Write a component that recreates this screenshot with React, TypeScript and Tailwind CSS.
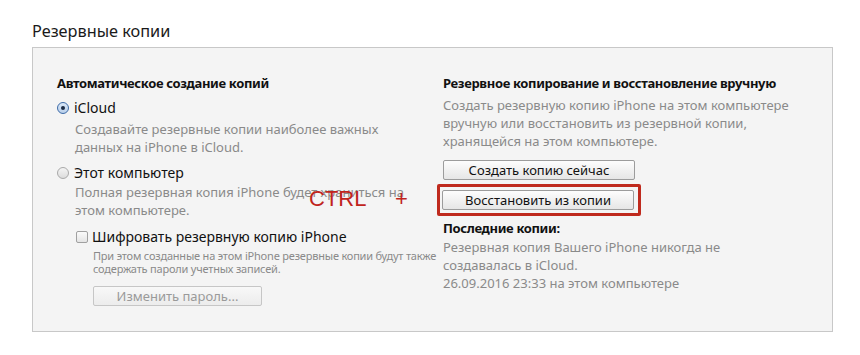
import React from "react";

const font = { fontFamily: '"Noto Sans", "Open Sans", sans-serif' };

function Radio({ checked }: { checked: boolean }) {
  return checked ? (
    <span className="flex h-[12px] w-[12px] shrink-0 items-center justify-center rounded-full border border-[#3d6ba8] bg-gradient-to-b from-[#dbe8f7] to-[#b9cfea]">
      <span className="h-[4px] w-[4px] rounded-full bg-[#1b2b44]" />
    </span>
  ) : (
    <span className="h-[12px] w-[12px] shrink-0 rounded-full border border-[#a9a9a9] bg-gradient-to-b from-[#f4f4f4] to-[#dcdcdc]" />
  );
}

function Btn({ children }: { children: React.ReactNode }) {
  return (
    <div className="flex h-[20px] w-[192px] items-center justify-center rounded-[2px] border border-[#9c9c9c] bg-gradient-to-b from-[#fdfdfd] to-[#e6e6e6] text-[13px] leading-none text-[#111]">
      {children}
    </div>
  );
}

export default function App() {
  return (
    <div className="relative h-[355px] w-[860px] bg-white" style={font}>
      <div className="pl-[32px] pt-[19px] text-[16.3px] leading-[24px] text-[#1a1a1a]">
        Резервные копии
      </div>
      <div className="ml-[32px] mt-[4px] flex h-[285px] w-[801px] border border-[#c8c8c8] bg-[#f4f4f4] pl-[24px] pt-[26px]">
        {/* left column */}
        <div className="w-[386px] shrink-0">
          <div className="text-[13px] font-bold leading-[18px] tracking-[-0.35px] text-[#111]">
            Автоматическое создание копий
          </div>
          <div className="mt-[7px] flex items-center gap-[5px]">
            <Radio checked />
            <span className="text-[14px] leading-[18px] text-[#111]">iCloud</span>
          </div>
          <div className="ml-[18px] mt-[3px] text-[13px] leading-[18px] text-[#8a8a8a]">
            Создавайте резервные копии наиболее важных
            <br />
            данных на iPhone в iCloud.
          </div>
          <div className="mt-[8px] flex items-center gap-[5px]">
            <Radio checked={false} />
            <span className="text-[14px] leading-[18px] text-[#111]">Этот компьютер</span>
          </div>
          <div className="ml-[18px] mt-[1px] text-[13px] leading-[18px] text-[#8a8a8a]">
            Полная резервная копия iPhone будет храниться на
            <br />
            этом компьютере.
          </div>
          <div className="ml-[19px] mt-[9px] flex items-center gap-[4px]">
            <span className="h-[12px] w-[12px] shrink-0 rounded-[2px] border border-[#a0a0a0] bg-gradient-to-b from-[#fafafa] to-[#e4e4e4]" />
            <span className="text-[14px] leading-[18px] text-[#111]">
              Шифровать резервную копию iPhone
            </span>
          </div>
          <div className="ml-[36px] mt-[3px] text-[11px] leading-[13px] tracking-[-0.2px] text-[#8a8a8a]">
            При этом созданные на этом iPhone резервные копии будут также
            <br />
            содержать пароли учетных записей.
          </div>
          <div className="ml-[36px] mt-[11px] flex h-[20px] w-[169px] items-center justify-center rounded-[2px] border border-[#c6c6c6] bg-gradient-to-b from-[#f8f8f8] to-[#ececec] text-[13px] leading-none text-[#9a9a9a]">
            Изменить пароль...
          </div>
        </div>
        {/* right column */}
        <div className="flex flex-col">
          <div className="text-[13px] font-bold leading-[18px] tracking-[-0.35px] text-[#111]">
            Резервное копирование и восстановление вручную
          </div>
          <div className="mt-[4px] text-[13px] leading-[18px] text-[#8a8a8a]">
            Создать резервную копию iPhone на этом компьютере
            <br />
            вручную или восстановить из резервной копии,
            <br />
            хранящейся на этом компьютере.
          </div>
          <div className="mt-[10px]">
            <Btn>Создать копию сейчас</Btn>
          </div>
          <div className="ml-[-6px] mt-[4px] w-[204px] rounded-[2px] border-[3px] border-[#bf2a1d] px-[2px] py-[3px]">
            <Btn>Восстановить из копии</Btn>
          </div>
          <div className="mt-[3px] text-[13px] font-bold leading-[18px] tracking-[-0.35px] text-[#111]">
            Последние копии:
          </div>
          <div className="mt-[1px] text-[13px] leading-[18px] text-[#8a8a8a]">
            Резервная копия Вашего iPhone никогда не
            <br />
            создавалась в iCloud.
            <br />
            26.09.2016 23:33 на этом компьютере
          </div>
        </div>
      </div>
      {/* overlay annotation */}
      <div
        className="absolute left-[309px] top-[185px] text-[22px] leading-[28px] text-[#c0241c]"
        style={{ fontFamily: '"Liberation Sans", Arial, sans-serif' }}
      >
        CTRL
      </div>
      <div
        className="absolute left-[395px] top-[185px] text-[22px] leading-[28px] text-[#c0241c]"
        style={{ fontFamily: '"Liberation Sans", Arial, sans-serif' }}
      >
        +
      </div>
    </div>
  );
}
